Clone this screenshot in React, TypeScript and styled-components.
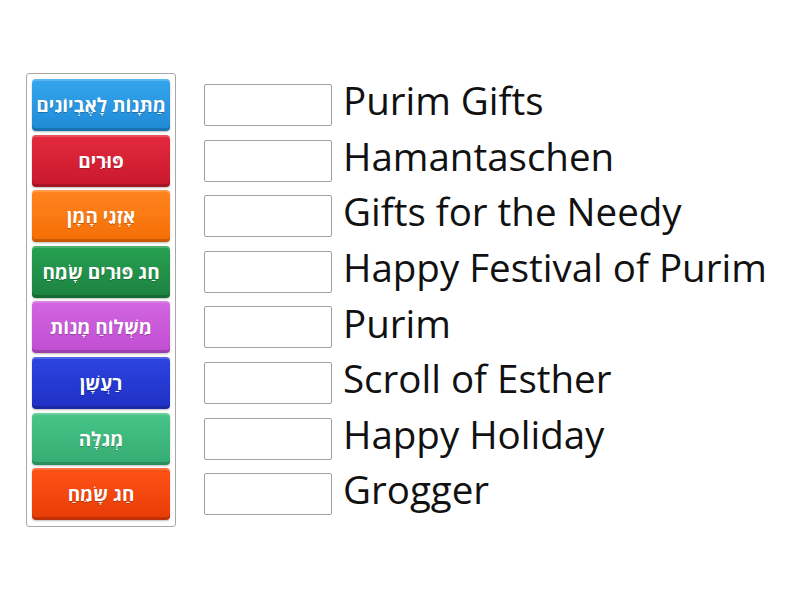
import React from "react";
import styled, { createGlobalStyle } from "styled-components";

const Global = createGlobalStyle`
  html, body { margin: 0; padding: 0; background: #fff; }
  body { font-family: "Open Sans", "Noto Sans", sans-serif; }
`;

const Page = styled.div`
  display: flex;
  align-items: flex-start;
  padding: 73px 0 0 26px;
  width: 800px;
  height: 600px;
  box-sizing: border-box;
`;

const Bank = styled.div`
  display: flex;
  flex-direction: column;
  gap: 3.6px;
  padding: 5px 5px 6px;
  width: 150px;
  box-sizing: border-box;
  border: 1px solid #a8a8a8;
  border-radius: 3px;
`;

const Tile = styled.div<{ $c: string; $d: string }>`
  height: 52px;
  border-radius: 4px;
  background: linear-gradient(${(p) => p.$c}, ${(p) => p.$d});
  box-shadow: inset 0 2px 0 rgba(255, 255, 255, 0.18),
    inset 0 -3px 0 rgba(0, 0, 0, 0.18), 0 1px 2px rgba(0, 0, 0, 0.25);
  display: flex;
  align-items: center;
  justify-content: center;
  color: #fff;
  font-family: "Open Sans", "Noto Sans", sans-serif;
  font-weight: 700;
  font-size: 19px;
  direction: rtl;
  white-space: nowrap;
  text-shadow: 0 1px 1px rgba(0, 0, 0, 0.25);
`;

const Targets = styled.div`
  display: flex;
  flex-direction: column;
  gap: 3.6px;
  margin-left: 28px;
  padding-top: 6px;
`;

const Row = styled.div`
  height: 52px;
  display: flex;
  align-items: center;
  gap: 11px;
`;

const Slot = styled.div`
  width: 128px;
  height: 42px;
  box-sizing: border-box;
  border: 1px solid #a0a0a0;
  border-radius: 2px;
  background: #fff;
  flex: none;
`;

const Label = styled.span`
  font-family: "Open Sans", sans-serif;
  font-size: 38.5px;
  color: #111;
  white-space: nowrap;
  line-height: 1;
  margin-top: -9px;
`;

const tiles: [string, string, string][] = [
  ["מַתָּנוֹת לָאֶבְיוֹנִים", "#35a6ee", "#1f8ad6"],
  ["פּוּרִים", "#e42a3e", "#c8182c"],
  ["אָזְנֵי הָמָן", "#ff8520", "#f56e05"],
  ["חַג פּוּרִים שָׂמֵחַ", "#28a152", "#1c8240"],
  ["מִשְׁלוֹחַ מָנוֹת", "#d266e0", "#c04ed2"],
  ["רַעֲשָׁן", "#2c44e0", "#1f30c4"],
  ["מְגִלָּה", "#48c589", "#35ab72"],
  ["חַג שָׂמֵחַ", "#ff5215", "#e83c08"],
];

const labels = [
  "Purim Gifts",
  "Hamantaschen",
  "Gifts for the Needy",
  "Happy Festival of Purim",
  "Purim",
  "Scroll of Esther",
  "Happy Holiday",
  "Grogger",
];

export default function App() {
  return (
    <>
      <Global />
      <Page>
        <Bank>
          {tiles.map(([t, c, d]) => (
            <Tile key={t} $c={c} $d={d}>
              {t}
            </Tile>
          ))}
        </Bank>
        <Targets>
          {labels.map((l) => (
            <Row key={l}>
              <Slot />
              <Label>{l}</Label>
            </Row>
          ))}
        </Targets>
      </Page>
    </>
  );
}
